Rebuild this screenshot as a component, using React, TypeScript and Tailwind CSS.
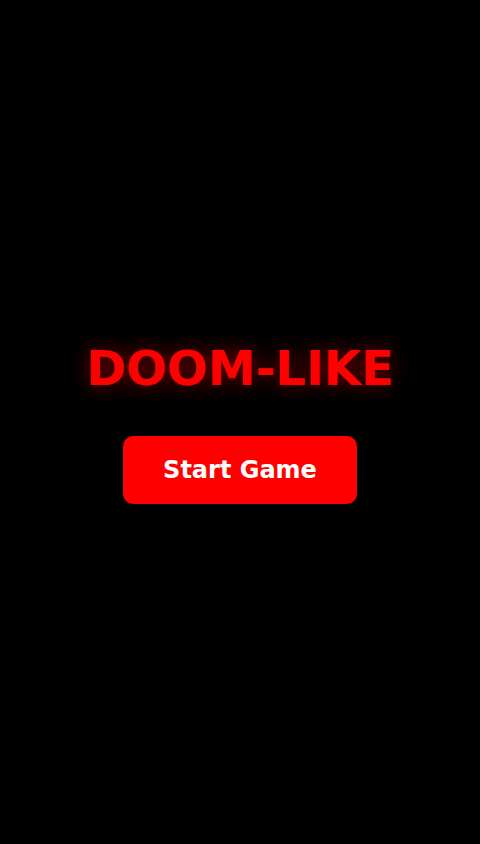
export default function App() {
  return (
    <div className="flex min-h-[844px] w-full flex-col items-center justify-center bg-black" style={{ fontFamily: '"DejaVu Sans", sans-serif' }}>
      <h1 className="mb-10 text-[48px] font-bold leading-[normal] text-[#ff0000] [text-shadow:0_0_20px_rgba(255,0,0,0.5)]">DOOM-LIKE</h1>
      <button className="rounded-[10px] bg-[#ff0000] px-10 py-5 text-[24px] font-bold leading-[normal] text-white">Start Game</button>
    </div>
  );
}
